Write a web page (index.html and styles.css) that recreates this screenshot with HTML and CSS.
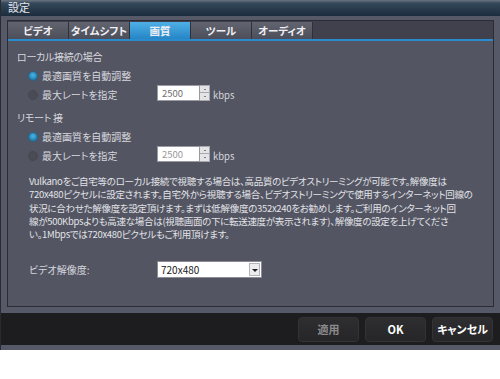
FILE: index.html
```html
<!DOCTYPE html>
<html lang="ja">
<head>
    <meta charset="UTF-8">
    <meta name="viewport" content="width=device-width, initial-scale=1.0">
    <title>設定</title>
    <link rel="stylesheet" href="styles.css">
</head>
<body>
    <div class="window">
        <div class="titlebar">設定</div>

        <div class="frame">
            <div class="panel">
                <!-- Tabs -->
                <div class="tabs">
                    <div class="tab">ビデオ</div>
                    <div class="tab">タイムシフト</div>
                    <div class="tab active">画質</div>
                    <div class="tab">ツール</div>
                    <div class="tab">オーディオ</div>
                </div>

                <div class="content">
                    <div class="heading">ローカル接続の場合</div>
                    <div class="row">
                        <span class="radio on"></span>
                        <span class="label">最適画質を自動調整</span>
                    </div>
                    <div class="row">
                        <span class="radio"></span>
                        <span class="label">最大レートを指定</span>
                        <span class="spin">
                            <span class="spin-value">2500</span>
                            <span class="spin-buttons"><span class="up"></span><span class="down"></span></span>
                        </span>
                        <span class="unit">kbps</span>
                    </div>

                    <div class="heading second">リモート 接</div>
                    <div class="row">
                        <span class="radio on"></span>
                        <span class="label">最適画質を自動調整</span>
                    </div>
                    <div class="row">
                        <span class="radio"></span>
                        <span class="label">最大レートを指定</span>
                        <span class="spin disabled">
                            <span class="spin-value">2500</span>
                            <span class="spin-buttons"><span class="up"></span><span class="down"></span></span>
                        </span>
                        <span class="unit">kbps</span>
                    </div>

                    <p class="note">Vulkanoをご自宅等のローカル接続で視聴する場合は、高品質のビデオストリーミングが可能です。解像度は<br>720x480ピクセルに設定されます。自宅外から視聴する場合、ビデオストリーミングで使用するインターネット回線の<br>状況に合わせた解像度を設定頂けます。まずは低解像度の352x240をお勧めします。ご利用のインターネット回<br>線が500Kbpsよりも高速な場合は(視聴画面の下に転送速度が表示されます)、解像度の設定を上げてくださ<br>い。1Mbpsでは720x480ピクセルもご利用頂けます。</p>

                    <div class="res-row">
                        <span class="res-label">ビデオ解像度:</span>
                        <div class="select">
                            <span class="select-value">720x480</span>
                            <span class="select-arrow"></span>
                        </div>
                    </div>
                </div>
            </div>
        </div>

        <div class="footer">
            <button class="btn disabled">適用</button>
            <button class="btn">OK</button>
            <button class="btn">キャンセル</button>
        </div>
    </div>
</body>
</html>
```

FILE: styles.css
```css
body {
    margin: 0;
    background: #ffffff;
    font-family: "Noto Sans CJK JP", "Noto Sans", sans-serif;
    font-feature-settings: "palt";
}
.window {
    width: 500px;
    height: 350px;
    background: #565967;
    border-left: 1px solid #2a2b31;
    box-sizing: border-box;
    display: flex;
    flex-direction: column;
}
.titlebar {
    height: 16px;
    line-height: 15px;
    padding-left: 7px;
    font-size: 11px;
    color: #e4e8ee;
    background: linear-gradient(#6a7480 0, #34485a 20%, #1b2c3d 100%);
}
.frame {
    padding: 4px 6px 6px 6px;
}
.panel {
    height: 287px;
    box-sizing: border-box;
    border: 1px solid #2b2c34;
    background: #535562;
    display: flex;
    flex-direction: column;
}
.tabs {
    display: flex;
    padding-top: 1px;
    background: #40414c;
    border-bottom: 2px solid #2a8ccf;
}
.tab {
    width: 60px;
    height: 17px;
    line-height: 17px;
    text-align: center;
    font-size: 10.5px;
    font-weight: bold;
    color: #f0f0f4;
    background: linear-gradient(#62646f, #4c4e5a);
    border-right: 1px solid #2f3038;
}
.tab.active {
    background: linear-gradient(#4fb0e6, #2585c6);
}
.content {
    padding: 6px 9px 0 9px;
    color: #d6d7de;
}
.heading {
    height: 19px;
    line-height: 19px;
    font-size: 10px;
    letter-spacing: -0.3px;
}
.heading.second {
    margin-top: 4px;
}
.row {
    height: 19px;
    display: flex;
    align-items: center;
    padding-left: 11px;
}
.radio {
    width: 10px;
    height: 10px;
    border-radius: 50%;
    background: #4a4c55;
    border: 1px solid #464851;
    box-sizing: border-box;
    margin-right: 4px;
}
.radio.on {
    background: radial-gradient(circle at 50% 40%, #4fb4e4 0, #2a8bbd 55%, #1c5f84 100%);
    border-color: #24688e;
}
.label {
    width: 115px;
    font-size: 10px;
}
.spin {
    display: flex;
    width: 53px;
    height: 16px;
    margin-top: -4px;
}
.spin-value {
    flex: 1;
    background: #ffffff;
    border: 1px solid #9a9aa2;
    font-size: 9.5px;
    line-height: 14px;
    padding-left: 4px;
    color: #707070;
}
.spin.disabled .spin-value {
    color: #9a9a9a;
}
.spin-buttons {
    width: 10px;
    display: flex;
    flex-direction: column;
}
.spin-buttons span {
    flex: 1;
    background: #e4e4e6;
    border: 1px solid #a8a8ae;
    border-left: none;
    position: relative;
}
.spin-buttons .up {
    border-bottom: none;
}
.spin-buttons span::after {
    content: "";
    position: absolute;
    left: 4px;
    top: 3px;
    width: 2px;
    height: 1px;
    background: #808080;
}
.unit {
    margin-left: 3px;
    font-size: 9.5px;
}
.note {
    margin: 10px 0 0 12px;
    font-size: 9.5px;
    line-height: 13.3px;
    letter-spacing: -0.3px;
    white-space: nowrap;
    color: #e2e3e8;
}
.res-row {
    display: flex;
    align-items: center;
    margin-top: 20px;
    padding-left: 12px;
}
.res-label {
    width: 128px;
    font-size: 10px;
}
.select {
    display: flex;
    width: 105px;
    height: 17px;
    box-sizing: border-box;
    border: 1px solid #8c8c94;
    background: #ffffff;
}
.select-value {
    flex: 1;
    font-size: 10px;
    line-height: 15px;
    padding-left: 3px;
    color: #202020;
}
.select-arrow {
    width: 11px;
    margin: 1px;
    background: #ececee;
    border: 1px solid #b4b4b8;
    box-sizing: border-box;
    position: relative;
}
.select-arrow::after {
    content: "";
    position: absolute;
    left: 2px;
    top: 5px;
    border-left: 3px solid transparent;
    border-right: 3px solid transparent;
    border-top: 3px solid #202020;
}
.footer {
    height: 32px;
    background: #1d1d1f;
    display: flex;
    justify-content: flex-end;
    align-items: center;
    gap: 6px;
    padding-right: 7px;
}
.btn {
    width: 61px;
    height: 25px;
    padding: 0;
    white-space: nowrap;
    border: 1px solid #333336;
    border-radius: 4px;
    background: linear-gradient(#2e2e31, #262628);
    color: #ffffff;
    font-family: "Noto Sans CJK JP", "Noto Sans", sans-serif;
    font-feature-settings: "palt";
    font-size: 11px;
    font-weight: bold;
    cursor: pointer;
}
.btn.disabled {
    color: #8a8a8c;
}
```
